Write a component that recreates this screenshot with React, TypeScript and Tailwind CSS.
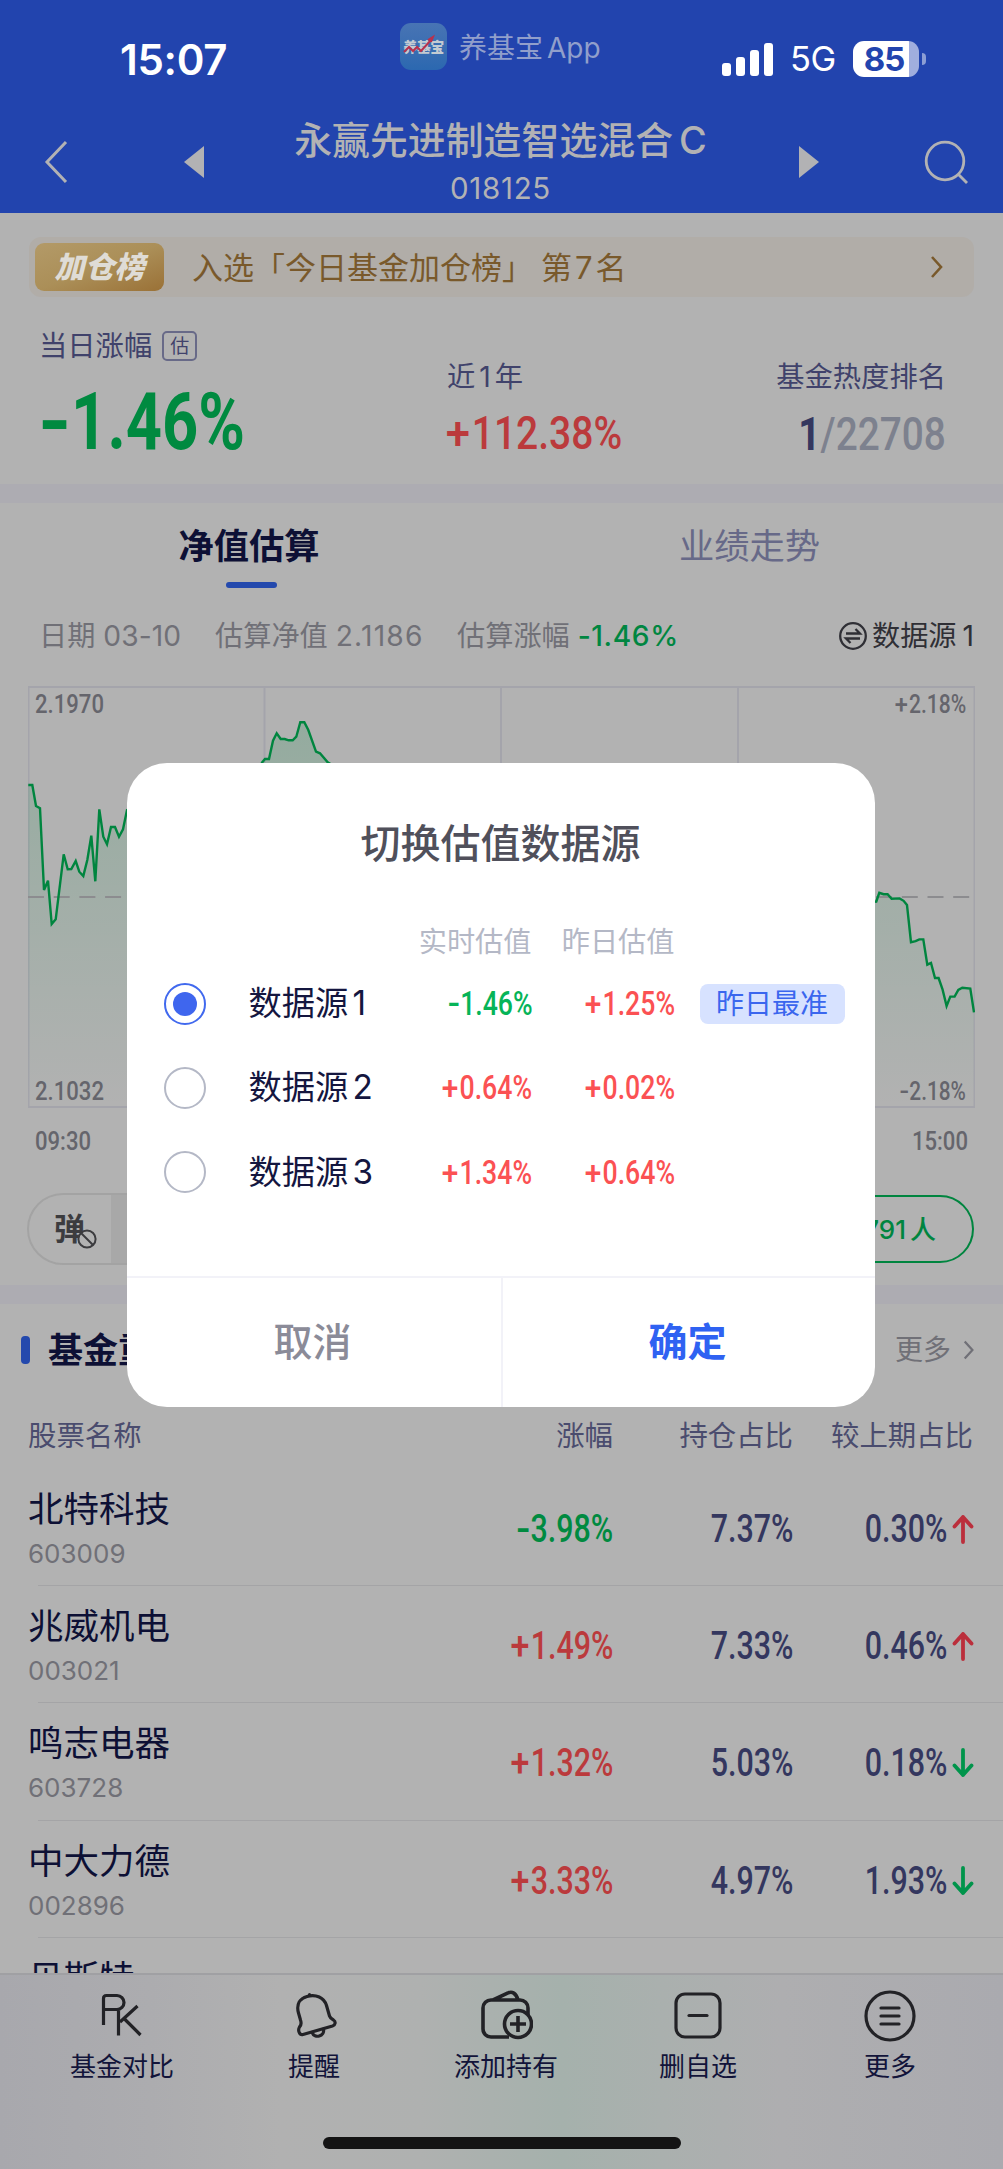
import { useState } from "react";
import clsx from "clsx";

interface Source {
  name: string;
  live: string;
  yesterday: string;
  best?: boolean;
}

interface Holding {
  name: string;
  code: string;
  change: string;
  ratio: string;
  diff: string;
  up: boolean;
}

const sources: Source[] = [
  { name: "1", live: "-1.46%", yesterday: "+1.25%", best: true },
  { name: "2", live: "+0.64%", yesterday: "+0.02%" },
  { name: "3", live: "+1.34%", yesterday: "+0.64%" },
];

const holdings: Holding[] = [
  { name: "北特科技", code: "603009", change: "-3.98%", ratio: "7.37%", diff: "0.30%", up: true },
  { name: "兆威机电", code: "003021", change: "+1.49%", ratio: "7.33%", diff: "0.46%", up: true },
  { name: "鸣志电器", code: "603728", change: "+1.32%", ratio: "5.03%", diff: "0.18%", up: false },
  { name: "中大力德", code: "002896", change: "+3.33%", ratio: "4.97%", diff: "1.93%", up: false },
];

const linePoints =
  "0.3,99 4.3,99 8,120 12,122.3 16,204 20,194.7 23.7,238 27.7,233.3 35.7,168.3 39.7,183.3 43.3,183 47.7,175 51.3,185.7 55.3,190 59.3,174 63.3,149.7 67.3,195.3 71.3,123.3 75.3,150.7 79,158.3 83,141 87,141 91,150.7 95,143.3 99,124 130,110 230,84 234.3,76.3 237,73 241,73 245,54.7 248.7,47.3 252.7,53 256.7,53 260.7,54.3 264.7,54.3 268.3,50.7 272.3,36.3 276.3,36.3 280.3,44 288,65.7 292,67.3 299.7,76.3 400,140 600,190 780,220 848.3,215.5 851.3,206.8 855.6,208.2 859.6,208.2 863.6,212.7 871.6,212.4 875.6,214.8 879,219 883,256.2 887.6,255.2 891.3,253.4 895.3,253.4 899.3,278.7 903,276.9 907,292 910.6,292 914.6,303.6 918.6,320 922.3,310.6 926.6,310.6 930.3,303.9 934.3,301.8 942.3,302.5 946,326.4";

// Narrow figures, close to a DIN face; the sign gets some extra room
function Num({ className, value }: { className?: string; value: string }) {
  const sign = /^[+-]/.test(value) ? value[0] : "";
  return (
    <span
      className={clsx(
        "inline-block whitespace-nowrap font-['Roboto','Liberation_Sans',sans-serif] leading-none",
        className,
      )}
    >
      {sign && (
        <span className={clsx("inline-block", sign === "-" ? "mr-[0.13em] origin-left scale-x-[1.35]" : "mr-[0.08em] scale-x-[1.12]")}>
          {sign}
        </span>
      )}
      {value.slice(sign.length)}
    </span>
  );
}

function Chevron({ className }: { className?: string }) {
  return (
    <svg viewBox="0 0 14 24" className={className} fill="none" stroke="currentColor" strokeWidth="2.6">
      <path d="M2 2l9 10-9 10" />
    </svg>
  );
}

function StatusBar() {
  return (
    <div className="flex h-[108px] pl-[120px] pr-[77px] text-white">
      <div className="mt-[36px] w-[280px] text-[42px] font-semibold leading-[48px] tracking-[-0.3px]">15:07</div>
      <div className="mt-[23px] flex h-[47px] items-center gap-3 text-[28px] text-[#919fcb]">
        <div className="relative grid size-[47px] place-items-center rounded-[11px] bg-gradient-to-b from-[#4874b4] to-[#2b68b0]">
          <span className="text-[14px] font-black leading-none tracking-[-0.5px] text-[#c3cbd2]">养基宝</span>
          <svg viewBox="0 0 47 47" className="absolute inset-0" fill="none" stroke="#b8304c" strokeWidth="2">
            <path d="M4 29l5-5 4 4 4-4 4 4 10-11M28 17l5-3-2 5" />
          </svg>
        </div>
        <div className="flex items-center gap-1 whitespace-nowrap pt-0.5">
          养基宝<span>App</span>
        </div>
      </div>
      <div className="ml-auto mt-[41px] flex h-9 items-center">
        <svg viewBox="0 0 52 33" className="h-[33px] w-[52px]" fill="white">
          <rect x="0" y="20" width="9" height="13" rx="3" />
          <rect x="14" y="14" width="9" height="19" rx="3" />
          <rect x="28" y="7" width="9" height="26" rx="3" />
          <rect x="42" y="0" width="9" height="33" rx="3" />
        </svg>
        <span className="ml-[16px] w-[47px] text-[34.5px] leading-none tracking-[-0.5px]">5G</span>
        <div className="ml-4 grid h-9 w-[66px] place-items-center rounded-[11px] bg-gradient-to-r from-white from-[85%] to-[#a0aede] to-[85%] pr-1 text-[33px] font-bold leading-none tracking-[-1px] text-[#2244ae]">
          85
        </div>
        <div className="ml-[3px] h-3 w-1 rounded-r-full bg-[#8c9ed4]" />
      </div>
    </div>
  );
}

function TitleBar() {
  return (
    <div className="flex h-[105px] items-center pb-1 pl-11 text-[#b2b2b4]">
      <svg viewBox="0 0 24 44" className="mt-1.5 h-11 w-6" fill="none" stroke="currentColor" strokeWidth="3">
        <path d="M22 2L3 22l19 20" />
      </svg>
      <svg viewBox="0 0 20 32" className="mt-1.5 ml-[116px] h-8 w-5" fill="currentColor">
        <path d="M20 0v32L0 16z" />
      </svg>
      <div className="flex w-[593px] flex-col items-center">
        <div className="flex items-center gap-[6px] text-[37.9px] font-medium leading-[56px]">
          永赢先进制造智选混合<span>C</span>
        </div>
        <div className="mt-[2px] text-[29.5px] leading-9 tracking-[0.7px]">018125</div>
      </div>
      <svg viewBox="0 0 20 32" className="mt-1.5 ml-0.5 h-8 w-5" fill="currentColor">
        <path d="M0 0v32l20-16z" />
      </svg>
      <svg viewBox="0 0 44 44" className="mt-1.5 ml-[105px] size-11" fill="none" stroke="currentColor" strokeWidth="2.8">
        <circle cx="21" cy="21" r="18.8" />
        <path d="M34 34l9 9" />
      </svg>
    </div>
  );
}

function Summary() {
  return (
    <section className="h-[271px] px-[29px] pt-6">
      <div className="flex h-[60px] items-center rounded-xl bg-[#b1ada8] pl-1.5 pr-[30px] text-[#79592b]">
        <span className="grid h-12 w-[129px] place-items-center rounded-[9px] bg-gradient-to-br from-[#b39a68] via-[#ab8f58] to-[#9a7136] text-[30px] font-black italic leading-none text-[#dfdcd6]">
          加仓榜
        </span>
        <span className="ml-7 text-[31px] leading-none">入选「今日基金加仓榜」</span>
        <span className="ml-2 text-[31px] leading-none tracking-[3px]">第7名</span>
        <Chevron className="ml-auto h-6 w-3.5" />
      </div>
      <div className="flex justify-between pl-2.5 pr-7 text-[28.3px] text-[#40426b]">
        <div className="w-[408px] pt-7">
          <div className="flex h-[42px] items-center gap-2.5">
            当日涨幅
            <span className="grid h-[30px] w-[35px] place-items-center rounded-[5px] border-2 border-[#686a88] text-[19px] leading-none">
              估
            </span>
          </div>
          <Num className="-ml-px mt-[15px] origin-left scale-x-[0.79] text-[80px] font-bold text-[#008a40]" value="-1.46%" />
        </div>
        <div className="flex-1 pt-[59px]">
          <div className="flex h-[42px] gap-1 leading-[42px]">
            近<span>1</span>年
          </div>
          <Num className="mt-[11px] origin-left scale-x-[0.83] text-[47px] font-medium text-[#bb3a3c]" value="+112.38%" />
        </div>
        <div className="pt-[59px] text-right">
          <div className="h-[42px] leading-[42px]">基金热度排名</div>
          <div className="mt-[11px] origin-right scale-x-[0.825] text-[47px] leading-none text-[#7d818e]">
            <Num className="font-bold text-[#34375f]" value="1" />
            <Num className="font-medium" value="/22708" />
          </div>
        </div>
      </div>
    </section>
  );
}

function Chart() {
  return (
    <div className="relative mx-7 h-[422px] w-[947px] text-[#65656c]">
      <svg viewBox="0 0 947 422" className="absolute inset-0 size-full" fill="none">
        <defs>
          <linearGradient id="area" x1="0" y1="0" x2="0" y2="1">
            <stop offset="0" stopColor="#008a40" stopOpacity="0.17" />
            <stop offset="1" stopColor="#008a40" stopOpacity="0" />
          </linearGradient>
        </defs>
        <g stroke="#a4a4ab" strokeWidth="2">
          <rect x="0.5" y="1" width="946" height="420" />
          <path d="M236.5 0v421M473 0v421M710 0v421" />
        </g>
        <polygon points={`0,421 ${linePoints} 946,421`} fill="url(#area)" />
        <path d="M0 211h947" stroke="#8c8c8f" strokeWidth="2" strokeDasharray="16 9.7" />
        <polyline points={linePoints} stroke="#00853f" strokeWidth="2.4" />
      </svg>
      <div className="relative flex h-full flex-col justify-between px-[7px] pb-[4px] pt-[5px] text-[26px] font-medium">
        <div className="flex justify-between">
          <Num className="origin-left scale-x-[0.85]" value="2.1970" />
          <Num className="mr-0.5 origin-right scale-x-[0.81]" value="+2.18%" />
        </div>
        <div className="flex justify-between">
          <Num className="origin-left scale-x-[0.85]" value="2.1032" />
          <Num className="mr-0.5 origin-right scale-x-[0.8]" value="-2.18%" />
        </div>
      </div>
    </div>
  );
}

function Estimate() {
  return (
    <section className="h-[782px]">
      <div className="flex h-[86px] pt-5 text-[35.3px] leading-[48px]">
        <div className="flex w-[498px] flex-col items-center font-bold text-[#0d1035]">
          净值估算
          <div className="ml-1 mt-[11px] h-[6px] w-[51px] rounded-sm bg-[#2449ad]" />
        </div>
        <div className="flex-1 pr-0.5 text-center text-[#676988]">业绩走势</div>
      </div>
      <div className="flex h-[97px] items-center pb-0.5 pl-[39px] pr-[29px] text-[28.2px] text-[#707077]">
        <span className="w-[176px]">
          日期 <span className="tracking-[0.1px]">03-10</span>
        </span>
        <span className="w-[242px]">
          估算净值 <span className="tracking-[1.2px]">2.1186</span>
        </span>
        <span>
          估算涨幅 <span className="font-medium tracking-[0.6px] text-[#008641]">-1.46%</span>
        </span>
        <div className="ml-auto flex items-center gap-[5px] text-[#2f2f35]">
          <svg viewBox="0 0 28 28" className="size-7" fill="none" stroke="currentColor" strokeWidth="2.3">
            <circle cx="14" cy="14" r="12.8" />
            <path d="M7 11.5h14l-4.5-4.5M21 16.5H7l4.5 4.5" />
          </svg>
          <span className="flex gap-1.5">
            数据源<span>1</span>
          </span>
        </div>
      </div>
      <Chart />
      <div className="flex justify-between px-[35px] pt-5 text-[26px] font-medium text-[#65656c]">
        <Num className="origin-left scale-x-[0.85]" value="09:30" />
        <Num className="origin-right scale-x-[0.85]" value="15:00" />
      </div>
      <div className="mt-[39px] flex h-[72px] items-center justify-between pl-[27px] pr-[29px]">
        <div className="flex h-[72px] w-[560px] overflow-hidden rounded-full border-2 border-[#a3a3a3] bg-[#a8a8a8]">
          <div className="relative w-[82px] bg-[#b2b2b2] pl-[25px] text-[31px] font-bold leading-[68px] text-[#3c3c3f]">
            弹
            <svg viewBox="0 0 22 22" className="absolute left-[47px] top-[33px] size-[22px]" fill="#b2b2b2" stroke="#3c3c3f" strokeWidth="2">
              <circle cx="11" cy="11" r="8.6" />
              <path d="M5 5l12 12" />
            </svg>
          </div>
        </div>
        <div className="flex h-[68px] w-[230px] items-center justify-end rounded-full border-2 border-[#00853f] pr-[36px] text-[26px] font-medium text-[#00853f]">
          791<span className="ml-1">人</span>
        </div>
      </div>
    </section>
  );
}

function Arrow({ up }: { up: boolean }) {
  return (
    <svg
      viewBox="0 0 22 30"
      className={clsx("ml-[5px] h-[30px] w-[22px]", up ? "text-[#bb2f3c]" : "rotate-180 text-[#00944b]")}
      fill="none"
      stroke="currentColor"
      strokeWidth="3.8"
      strokeLinecap="round"
      strokeLinejoin="round"
    >
      <path d="M11 28V3M2.500 12.500L11 3l8.500 9.500" />
    </svg>
  );
}

function Holdings() {
  return (
    <section>
      <div className="flex h-[92px] items-center pl-[21px] pr-7">
        <div className="h-7 w-[9px] rounded-[4px] bg-[#2449ad]" />
        <h2 className="ml-[18px] text-[35px] font-bold text-[#0d1035]">基金重仓股</h2>
        <div className="ml-auto flex items-center gap-3 text-[28px] text-[#707077]">
          更多
          <Chevron className="h-[22px] w-3" />
        </div>
      </div>
      <div className="flex h-[73px] items-center pl-7 pt-[8px] text-[28.4px] text-[#4a4c6e] [&>span]:text-right">
        <div className="w-[299px]">股票名称</div>
        <span className="w-[286px]">涨幅</span>
        <span className="w-[180px]">持仓占比</span>
        <span className="w-[180px]">较上期占比</span>
      </div>
      {holdings.map((h) => (
        <div key={h.code} className="relative flex h-[117.2px] pl-7 font-medium text-[#34375f]">
          <div className="w-[299px] pt-[17px] font-normal">
            <div className="text-[35.5px] leading-[48px] text-[#0d1035]">{h.name}</div>
            <div className="mt-[4px] text-[26px] leading-8 text-[#707077]">{h.code}</div>
          </div>
          <div className="flex h-[120px] w-[286px] items-center justify-end">
            <Num
              className={clsx(
                "origin-right scale-x-[0.8] text-[38px]",
                h.change.startsWith("-") ? "text-[#008a40]" : "text-[#bb3a3c]",
              )}
              value={h.change}
            />
          </div>
          <div className="flex h-[120px] w-[180px] items-center justify-end">
            <Num className="origin-right scale-x-[0.8] text-[38px]" value={h.ratio} />
          </div>
          <div className="flex h-[120px] w-[181px] items-center justify-end">
            <Num className="origin-right scale-x-[0.8] text-[38px]" value={h.diff} />
            <Arrow up={h.up} />
          </div>
          <div className="absolute bottom-0 left-[38px] right-0 h-px bg-[#a4a4a6]" />
        </div>
      ))}
      <div className="pl-7 pt-[17px] text-[35.5px] leading-[48px] text-[#0d1035]">贝斯特</div>
    </section>
  );
}

const iconProps = {
  viewBox: "0 0 54 54",
  className: "size-[54px]",
  fill: "none",
  stroke: "currentColor",
  strokeWidth: 3.2,
} as const;

const actions = [
  {
    label: "基金对比",
    icon: (
      <svg {...iconProps}>
        <path d="M8.500 36V9.500q0-3 3-3H22a7 7 0 0 1 0 14H8.500M23.500 21.500v25M42.500 17L25 33M28.500 29l17 17" />
      </svg>
    ),
  },
  {
    label: "提醒",
    icon: (
      <svg {...iconProps}>
        <path
          d="M12.500 38c2-2 2-4 1-7l-2-7C9 15 13 9.500 20 7.500c9-2.500 17 1 19.500 9L42.500 27c.6 2 2 3 4 4 2.500 1.500 2 5-1 6L16 45.500c-3.500 1-5.500-4-3.500-7.500z"
          strokeLinejoin="round"
        />
        <path d="M25 43.500c2.500 6.500 13 4 11.500-3.500M22.500 6v-.5" strokeLinecap="round" />
      </svg>
    ),
  },
  {
    label: "添加持有",
    icon: (
      <svg {...iconProps} strokeWidth={3.6}>
        <path d="M30 48H12a8 8 0 0 1-8-8V19a8 8 0 0 1 8-8h29a8 8 0 0 1 8 8v7M14 11l15-7c4-2 8 0 10 7" />
        <circle cx="39" cy="35" r="13.5" />
        <path d="M39 27v16M31 35h16" />
      </svg>
    ),
  },
  {
    label: "删自选",
    icon: (
      <svg {...iconProps}>
        <rect x="5" y="5" width="44" height="43" rx="9" />
        <path d="M18 26.500h18" strokeLinecap="round" />
      </svg>
    ),
  },
  {
    label: "更多",
    icon: (
      <svg {...iconProps}>
        <circle cx="27" cy="27" r="24" />
        <path d="M18 19h18M18 27h18M18 35h18" strokeLinecap="round" />
      </svg>
    ),
  },
];

function BottomBar() {
  return (
    <nav className="flex h-[196px] shrink-0 flex-col items-center border-t-2 border-[#a0a0a3] bg-[linear-gradient(90deg,#a8a8ad_0%,#acacaf_15%,#b1b1b1_28%,#afb1b0_42%,#a5b1ac_56%,#aab0ae_66%,#aeaeb0_78%,#aaaaaf_100%)]">
      <div className="flex w-full pl-[26px] pt-[14px]">
        {actions.map((a) => (
          <div key={a.label} className="flex w-[192px] shrink-0 flex-col items-center text-[#222226]">
            {a.icon}
            <span className="mt-[6px] text-[26px] leading-9 text-[#12143a]">{a.label}</span>
          </div>
        ))}
      </div>
      <div className="mt-[52px] h-3 w-[358px] rounded-full bg-[#141414]" />
    </nav>
  );
}

function SourceDialog() {
  const [active, setActive] = useState("1");

  return (
    <div className="absolute inset-0 grid place-items-center pr-[2px]">
      <div role="dialog" className="flex h-[644px] w-[748px] flex-col overflow-hidden rounded-[40px] bg-white">
        <h3 className="mt-[51px] text-center text-[40px] font-medium leading-[60px] text-[#50505b]">
          切换估值数据源
        </h3>
        <div className="mt-[48px] flex h-[42px] items-center text-[28.2px] leading-none text-[#b4b8c6] [&>span]:text-right">
          <span className="w-[405px]">实时估值</span>
          <span className="w-[143px]">昨日估值</span>
        </div>
        <div className="-mt-[2px] flex flex-col">
          {sources.map((s) => {
            const on = active === s.name;
            return (
              <button
                key={s.name}
                onClick={() => setActive(s.name)}
                className="flex h-[84.400px] items-center pl-[37px] text-left text-[33.3px] text-[#14163f]"
              >
                <i
                  className={clsx(
                    "grid size-[42px] place-items-center rounded-full border-2",
                    on ? "border-[#4169ee]" : "border-[#b4b8c6]",
                  )}
                >
                  {on && <i className="size-6 rounded-full bg-[#3f66ee]" />}
                </i>
                <span className="ml-[43px] flex w-[140px] gap-1">
                  数据源<span>{s.name}</span>
                </span>
                <span className="w-[144px] text-right font-medium leading-none">
                  <Num
                    className={clsx(
                      "origin-right scale-x-[0.82] text-[32.500px]",
                      s.live.startsWith("-") ? "text-[#06b458]" : "text-[#fb5153]",
                    )}
                    value={s.live}
                  />
                </span>
                <span className="w-[143px] text-right font-medium leading-none">
                  <Num className="origin-right scale-x-[0.82] text-[32.500px] text-[#fb5153]" value={s.yesterday} />
                </span>
                {s.best && (
                  <span className="ml-[24px] h-10 w-[145px] rounded-lg bg-[#d7e2ff] text-center text-[28px] leading-[40px] text-[#3a66ee]">
                    昨日最准
                  </span>
                )}
              </button>
            );
          })}
        </div>
        <div className="mt-auto flex h-[131px] border-t-2 border-[#f2f2f8] text-[39px]">
          <button className="w-[376px] border-r-2 border-[#f2f2f8] pr-0.5 font-medium text-[#8b8b98]">取消</button>
          <button className="flex-1 pr-0.5 font-bold text-[#2f62f2]">确定</button>
        </div>
      </div>
    </div>
  );
}

export default function App() {
  return (
    <div className="relative flex h-[2169px] w-[1003px] flex-col overflow-hidden bg-[#b2b2b2] font-['Inter','Noto_Sans_CJK_SC',sans-serif]">
      <header className="h-[213px] shrink-0 bg-[#2244ae]">
        <StatusBar />
        <TitleBar />
      </header>
      <main className="min-h-0 flex-1 overflow-hidden">
        <Summary />
        <div className="h-[19px] bg-[#adacb2]" />
        <Estimate />
        <div className="h-[19px] bg-[#adacb2]" />
        <Holdings />
      </main>
      <BottomBar />
      <SourceDialog />
    </div>
  );
}
